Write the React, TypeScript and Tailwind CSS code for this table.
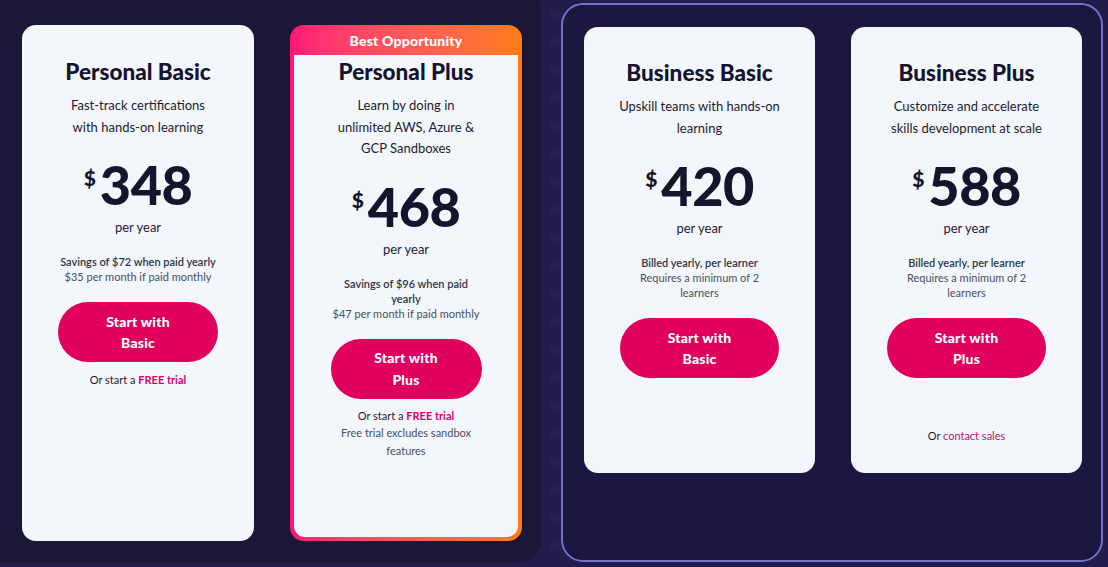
import React from "react";

function Price({ value }: { value: string }) {
  return (
    <div className="mt-[20px] flex items-start justify-center gap-[4px] text-[#16142d]">
      <span className="mt-[8px] text-[21px] leading-[24px] font-black">$</span>
      <span className="text-[54px] leading-[54px] font-black tracking-[-0.5px]">{value}</span>
    </div>
  );
}

function Button({ label, w }: { label: string; w: string }) {
  return (
    <button
      className={`${w} h-[60px] rounded-full bg-[#e1005e] text-white text-[14px] leading-[21.5px] font-black tracking-[0.2px] flex flex-col items-center justify-center`}
    >
      <span>Start with</span>
      <span>{label}</span>
    </button>
  );
}

export default function App() {
  return (
    <div
      className="w-[1108px] h-[567px] overflow-hidden flex items-start bg-[#221c4d] bg-[radial-gradient(circle,rgba(130,120,210,0.045)_0_5px,transparent_6px)] bg-[length:30px_28px] text-[#1b1a30]"
      style={{ fontFamily: "Lato, 'Liberation Sans', sans-serif" }}
    >
      {/* Personal panel */}
      <div className="-ml-[20px] -mt-[12px] w-[562px] h-[574px] shrink-0 rounded-[24px] bg-[#1b1736] flex gap-[36px] pl-[42px] pt-[37px]">
        {/* Personal Basic */}
        <div className="w-[232px] h-[516px] rounded-[14px] bg-[#f3f6fa] flex flex-col items-center pt-[33px]">
          <h2 className="text-[22.5px] leading-[28px] font-black text-[#15132d]">Personal Basic</h2>
          <p className="mt-[9px] text-[13px] leading-[21.5px] text-center text-[#1d1c32]">
            Fast-track certifications
            <br />
            with hands-on learning
          </p>
          <Price value="348" />
          <p className="mt-[5px] text-[13px] leading-[20px] text-[#23213a]">per year</p>
          <div className="mt-[17px] text-[11px] leading-[15px] text-center">
            <p className="font-semibold text-[#2d3547]">Savings of $72 when paid yearly</p>
            <p className="text-[#475063]">$35 per month if paid monthly</p>
          </div>
          <div className="mt-[18px]">
            <Button label="Basic" w="w-[160px]" />
          </div>
          <p className="mt-[10px] text-[11px] leading-[16px] text-[#1d1c32]">
            Or start a <span className="font-bold text-[#e0006a]">FREE trial</span>
          </p>
        </div>

        {/* Personal Plus */}
        <div className="w-[232px] h-[516px] rounded-[14px] bg-gradient-to-r from-[#ff1577] to-[#ff7d0d] flex flex-col">
          <div className="h-[30px] flex items-center justify-center text-white text-[14px] font-black tracking-[0.2px]">
            Best Opportunity
          </div>
          <div className="mx-[4px] mb-[4px] flex-1 rounded-b-[11px] bg-[#f3f6fa] flex flex-col items-center pt-[3px]">
            <h2 className="text-[22.5px] leading-[28px] font-black text-[#15132d]">Personal Plus</h2>
            <p className="mt-[9px] text-[13px] leading-[21.5px] text-center text-[#1d1c32]">
              Learn by doing in
              <br />
              unlimited AWS, Azure &amp;
              <br />
              GCP Sandboxes
            </p>
            <Price value="468" />
            <p className="mt-[5px] text-[13px] leading-[20px] text-[#23213a]">per year</p>
            <div className="mt-[17px] text-[11px] leading-[15px] text-center">
              <p className="font-semibold text-[#2d3547]">
                Savings of $96 when paid
                <br />
                yearly
              </p>
              <p className="text-[#475063]">$47 per month if paid monthly</p>
            </div>
            <div className="mt-[18px]">
              <Button label="Plus" w="w-[151px]" />
            </div>
            <p className="mt-[9px] text-[11px] leading-[16px] text-[#1d1c32]">
              Or start a <span className="font-bold text-[#e0006a]">FREE trial</span>
            </p>
            <p className="text-[11px] leading-[18px] text-center text-[#475063]">
              Free trial excludes sandbox
              <br />
              features
            </p>
          </div>
        </div>
      </div>

      {/* Business panel */}
      <div className="ml-[19px] mt-[3px] w-[542px] h-[559px] shrink-0 rounded-[22px] border-2 border-[#7571c9] bg-[#1c1740] flex gap-[36px] pl-[21px] pt-[22px]">
        {/* Business Basic */}
        <div className="w-[231px] h-[446px] rounded-[14px] bg-[#f3f6fa] flex flex-col items-center pt-[32px]">
          <h2 className="text-[22.5px] leading-[28px] font-black text-[#15132d]">Business Basic</h2>
          <p className="mt-[9px] text-[13px] leading-[21.5px] text-center text-[#1d1c32]">
            Upskill teams with hands-on
            <br />
            learning
          </p>
          <Price value="420" />
          <p className="mt-[5px] text-[13px] leading-[20px] text-[#23213a]">per year</p>
          <div className="mt-[17px] text-[11px] leading-[15px] text-center">
            <p className="font-semibold text-[#2d3547]">Billed yearly, per learner</p>
            <p className="text-[#475063]">
              Requires a minimum of 2
              <br />
              learners
            </p>
          </div>
          <div className="mt-[18px]">
            <Button label="Basic" w="w-[159px]" />
          </div>
        </div>

        {/* Business Plus */}
        <div className="w-[231px] h-[446px] rounded-[14px] bg-[#f3f6fa] flex flex-col items-center pt-[32px]">
          <h2 className="text-[22.5px] leading-[28px] font-black text-[#15132d]">Business Plus</h2>
          <p className="mt-[9px] text-[13px] leading-[21.5px] text-center text-[#1d1c32]">
            Customize and accelerate
            <br />
            skills development at scale
          </p>
          <Price value="588" />
          <p className="mt-[5px] text-[13px] leading-[20px] text-[#23213a]">per year</p>
          <div className="mt-[17px] text-[11px] leading-[15px] text-center">
            <p className="font-semibold text-[#2d3547]">Billed yearly, per learner</p>
            <p className="text-[#475063]">
              Requires a minimum of 2
              <br />
              learners
            </p>
          </div>
          <div className="mt-[18px]">
            <Button label="Plus" w="w-[159px]" />
          </div>
          <p className="mt-[50px] text-[11px] leading-[16px] text-[#1d1c32]">
            Or <span className="text-[#cc0f78]">contact sales</span>
          </p>
        </div>
      </div>
    </div>
  );
}
